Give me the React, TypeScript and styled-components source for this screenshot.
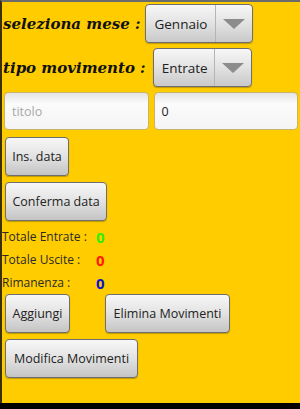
import React from 'react';
import styled, { createGlobalStyle } from 'styled-components';

const GlobalStyle = createGlobalStyle`
  html, body {
    margin: 0;
    padding: 0;
    background: #000;
  }
`;

const Screen = styled.div`
  box-sizing: border-box;
  width: 300px;
  height: 403px;
  background: #ffcc00;
  border-top: 2px solid #6b6b6b;
  border-left: 2px solid #3a3000;
  display: flex;
  flex-direction: column;
  font-family: 'Open Sans', 'DejaVu Sans', sans-serif;
  color: #222;
`;

const Row = styled.div<{ top?: number; gap?: number; left?: number }>`
  display: flex;
  align-items: center;
  gap: ${({ gap }) => gap ?? 5}px;
  margin-top: ${({ top }) => top ?? 0}px;
  padding: 0 2px 0 ${({ left }) => left ?? 0}px;
`;

const Title = styled.span`
  font-family: 'DejaVu Serif', 'Liberation Serif', serif;
  font-weight: bold;
  font-style: italic;
  font-size: 15px;
  color: #111;
  white-space: nowrap;
  padding-left: 1px;
`;

const Spinner = styled.div<{ width: number }>`
  box-sizing: border-box;
  width: ${({ width }) => width}px;
  height: 39px;
  display: flex;
  border: 1px solid #6e6e6e;
  border-radius: 4px;
  background: linear-gradient(#f7f7f7, #e2e2e2 50%, #c9c9c9);
  box-shadow: 0 1px 1px rgba(0, 0, 0, 0.25);
`;

const SpinnerText = styled.span`
  flex: 1;
  display: flex;
  align-items: center;
  padding-left: 8px;
  font-size: 13.5px;
  color: #222;
  border-right: 1px solid #b5b5b5;
`;

const SpinnerArrow = styled.span`
  width: 36px;
  display: flex;
  align-items: center;
  justify-content: center;
`;

const Field = styled.div<{ muted?: boolean }>`
  box-sizing: border-box;
  flex: 1;
  height: 38px;
  display: flex;
  align-items: center;
  padding-left: 7px;
  border: 1px solid #c9b36a;
  border-radius: 4px;
  background: linear-gradient(#e4e4e4, #fbfbfb 30%, #f4f4f4);
  font-size: 12.5px;
  color: ${({ muted }) => (muted ? '#a8a8a8' : '#222')};
`;

const Button = styled.div<{ width: number }>`
  box-sizing: border-box;
  width: ${({ width }) => width}px;
  height: 39px;
  display: flex;
  align-items: center;
  justify-content: center;
  border: 1px solid #6e6e6e;
  border-radius: 4px;
  background: linear-gradient(#f7f7f7, #e2e2e2 50%, #c4c4c4);
  box-shadow: 0 1px 1px rgba(0, 0, 0, 0.25);
  font-size: 12.5px;
  color: #222;
  white-space: nowrap;
`;

const Stat = styled.div`
  display: flex;
  align-items: center;
  height: 23px;
  font-size: 12px;
  color: #2a2a2a;
`;

const StatLabel = styled.span`
  width: 94px;
`;

const StatValue = styled.span<{ color: string }>`
  font-size: 15px;
  font-weight: bold;
  color: ${({ color }) => color};
`;

const Block = styled.div<{ top: number; left?: number }>`
  display: flex;
  flex-direction: column;
  align-items: flex-start;
  margin-top: ${({ top }) => top}px;
  padding-left: ${({ left }) => left ?? 0}px;
`;

const Arrow = () => (
  <svg width="22" height="10" viewBox="0 0 22 10">
    <path d="M0 0 L22 0 L11 10 Z" fill="#8c8c8c" />
  </svg>
);

export default function App() {
  return (
    <>
      <GlobalStyle />
      <Screen>
        <Row top={2}>
          <Title>seleziona mese :</Title>
          <Spinner width={108}>
            <SpinnerText>Gennaio</SpinnerText>
            <SpinnerArrow>
              <Arrow />
            </SpinnerArrow>
          </Spinner>
        </Row>
        <Row top={5} gap={7}>
          <Title>tipo movimento :</Title>
          <Spinner width={99}>
            <SpinnerText>Entrate</SpinnerText>
            <SpinnerArrow>
              <Arrow />
            </SpinnerArrow>
          </Spinner>
        </Row>
        <Row top={5} left={2}>
          <Field muted>titolo</Field>
          <Field>0</Field>
        </Row>
        <Block top={7} left={3}>
          <Button width={64}>Ins. data</Button>
        </Block>
        <Block top={6} left={3}>
          <Button width={102}>Conferma data</Button>
        </Block>
        <Block top={4}>
          <Stat>
            <StatLabel>Totale Entrate :</StatLabel>
            <StatValue color="#33ee00">0</StatValue>
          </Stat>
          <Stat>
            <StatLabel>Totale Uscite :</StatLabel>
            <StatValue color="#ff1a00">0</StatValue>
          </Stat>
          <Stat>
            <StatLabel>Rimanenza :</StatLabel>
            <StatValue color="#0a14c8">0</StatValue>
          </Stat>
        </Block>
        <Row top={0} gap={35} left={3}>
          <Button width={65}>Aggiungi</Button>
          <Button width={125}>Elimina Movimenti</Button>
        </Row>
        <Block top={6} left={3}>
          <Button width={133}>Modifica Movimenti</Button>
        </Block>
      </Screen>
    </>
  );
}
